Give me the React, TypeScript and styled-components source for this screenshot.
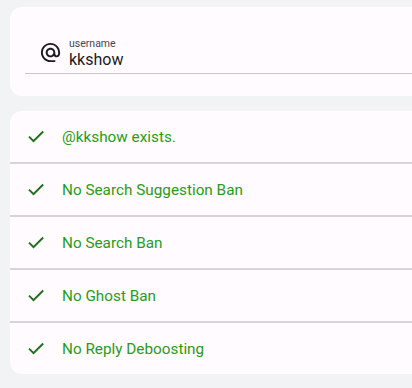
import React from 'react';
import styled, { createGlobalStyle } from 'styled-components';

const checks = [
  '@kkshow exists.',
  'No Search Suggestion Ban',
  'No Search Ban',
  'No Ghost Ban',
  'No Reply Deboosting',
];

const App: React.FC = () => {
  return (
    <Page>
      <GlobalStyle />
      <Card>
        <Field>
          <AtIcon viewBox="0 0 24 24">
            <path
              fill="#1c1b1f"
              d="M12 2C6.48 2 2 6.48 2 12s4.48 10 10 10h5v-2h-5c-4.34 0-8-3.66-8-8s3.66-8 8-8 8 3.66 8 8v1.43c0 .79-.71 1.57-1.5 1.57s-1.5-.78-1.5-1.57V12c0-2.760-2.24-5-5-5s-5 2.24-5 5 2.24 5 5 5c1.38 0 2.64-.56 3.54-1.47.65.89 1.77 1.47 2.96 1.47 1.970 0 3.5-1.6 3.5-3.57V12c0-5.52-4.48-10-10-10zm0 13c-1.66 0-3-1.34-3-3s1.34-3 3-3 3 1.34 3 3-1.34 3-3 3z"
            />
          </AtIcon>
          <FieldText>
            <FieldLabel>username</FieldLabel>
            <FieldValue>kkshow</FieldValue>
          </FieldText>
        </Field>
      </Card>
      <ResultCard>
        {checks.map(text => (
          <ResultRow key={text}>
            <CheckIcon viewBox="0 0 24 24">
              <path fill="#1f6f1c" d="M9 16.6L4.4 12l-1.6 1.6L9 19.8 21.4 7.4 19.8 5.8z" />
            </CheckIcon>
            <ResultText>{text}</ResultText>
          </ResultRow>
        ))}
      </ResultCard>
    </Page>
  );
};

export default App;

const GlobalStyle = createGlobalStyle`
  body {
    margin: 0;
    background: #f1f3f4;
    font-family: Roboto, "Noto Sans", sans-serif;
  }
`;

const Page = styled.div`
  display: flex;
  flex-direction: column;
  gap: 15px;
  padding: 7px 0 0 10px;
  width: 412px;
  height: 388px;
  box-sizing: border-box;
  overflow: hidden;
`;

const Card = styled.div`
  background: #fffbfe;
  border-radius: 12px 0 0 12px;
  padding: 25px 0 22px 15px;
`;

const Field = styled.div`
  display: flex;
  align-items: center;
  height: 39px;
  border-bottom: 1px solid #c9c7cc;
  padding-left: 14px;
  padding-bottom: 2px;
`;

const AtIcon = styled.svg`
  width: 23px;
  height: 23px;
  margin-right: 7px;
  margin-top: 2px;
`;

const FieldText = styled.div`
  display: flex;
  flex-direction: column;
  margin-top: 3px;
`;

const FieldLabel = styled.span`
  font-size: 10.5px;
  color: #49454f;
  line-height: 13px;
`;

const FieldValue = styled.span`
  font-size: 16px;
  color: #1c1b1f;
  line-height: 20px;
`;

const ResultCard = styled.div`
  background: #fffbfe;
  border-radius: 12px 0 0 12px;
  display: flex;
  flex-direction: column;
  overflow: hidden;
`;

const ResultRow = styled.div`
  display: flex;
  align-items: center;
  height: 51px;
  padding-left: 16px;
  & + & {
    border-top: 2px solid #d6d4d8;
  }
`;

const CheckIcon = styled.svg`
  width: 20px;
  height: 20px;
  margin-right: 16px;
  margin-top: -1px;
`;

const ResultText = styled.span`
  font-size: 15.3px;
  color: #2b9a1b;
  margin-top: 1px;
`;
